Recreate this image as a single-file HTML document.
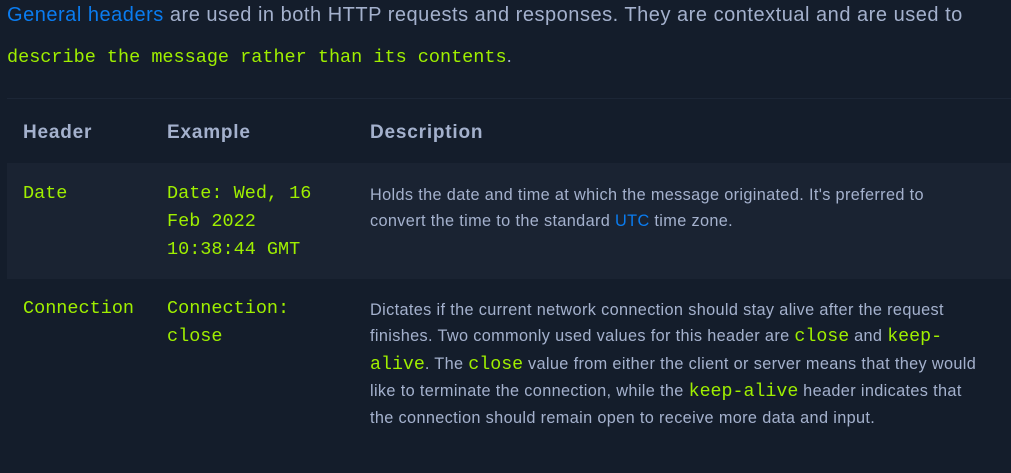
<!DOCTYPE html>
<html><head><style>
body{margin:0;background:#141d2b;width:1011px;height:473px;overflow:hidden;font-family:"Liberation Sans",sans-serif;color:#a4b1cd}
.p{position:absolute;left:7px;top:3px;font-size:20px;letter-spacing:0.52px;line-height:24px;white-space:nowrap}
.p2{position:absolute;left:7px;top:45px;font-family:"Liberation Mono",monospace;font-size:18.5px;color:#9fef00;white-space:nowrap}
a{color:#0a7cf0;text-decoration:none}
.g{color:#9fef00;font-family:"Liberation Mono",monospace;letter-spacing:0}
.line{position:absolute;left:7px;right:0;top:98px;height:1px;background:#1c2636}
.h{position:absolute;top:122px;font-weight:bold;font-size:19px;letter-spacing:0.8px;color:#a4b1cd}
.row1{position:absolute;left:7px;right:0;top:163px;height:116px;background:#1a2332}
.m{position:absolute;font-family:"Liberation Mono",monospace;font-size:18.5px;line-height:28px;color:#9fef00;white-space:nowrap}
.d{position:absolute;left:370px;font-size:16.3px;letter-spacing:0.35px;line-height:26.3px;color:#a4b1cd;white-space:nowrap}
.d .g{font-size:18.3px}
</style></head><body>
<div class="p"><a>General headers</a> are used in both HTTP requests and responses. They are contextual and are used to</div>
<div class="p2">describe the message rather than its contents<span style="color:#a4b1cd;font-family:'Liberation Sans'">.</span></div>
<div class="line"></div>
<div class="h" style="left:23px">Header</div>
<div class="h" style="left:167px">Example</div>
<div class="h" style="left:370px">Description</div>
<div class="row1"></div>
<div class="m" style="left:23px;top:180px">Date</div>
<div class="m" style="left:167px;top:180px">Date: Wed, 16<br>Feb 2022<br>10:38:44 GMT</div>
<div class="d" style="top:182px">Holds the date and time at which the message originated. It's preferred to<br>convert the time to the standard <a>UTC</a> time zone.</div>
<div class="m" style="left:23px;top:295px">Connection</div>
<div class="m" style="left:167px;top:295px">Connection:<br>close</div>
<div class="d" style="top:297px">Dictates if the current network connection should stay alive after the request<br>finishes. Two commonly used values for this header are <span class="g">close</span> and <span class="g">keep-</span><br><span class="g">alive</span>. The <span class="g">close</span> value from either the client or server means that they would<br>like to terminate the connection, while the <span class="g">keep-alive</span> header indicates that<br>the connection should remain open to receive more data and input.</div>
</body></html>
